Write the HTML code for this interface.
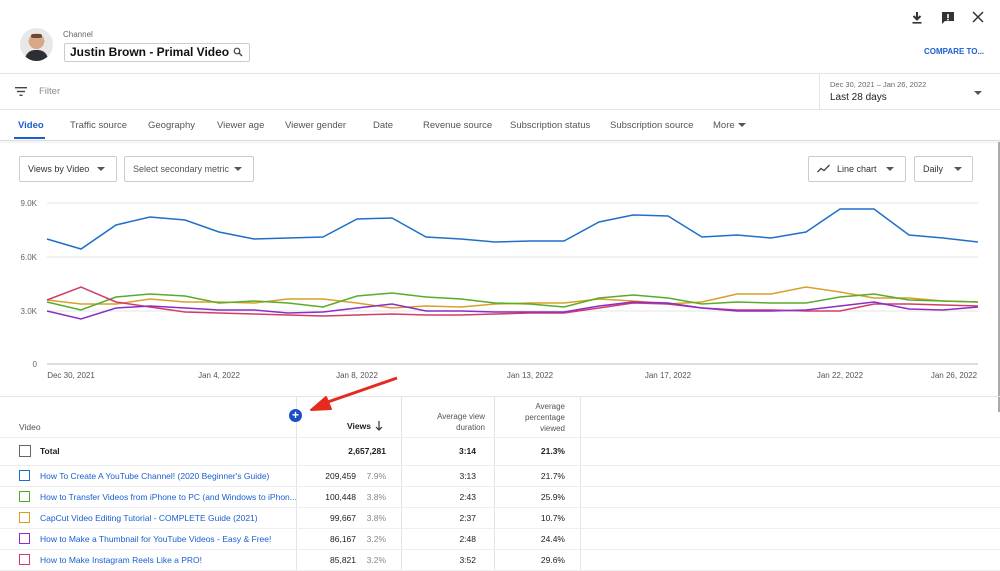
<!DOCTYPE html>
<html><head><meta charset="utf-8"><style>
*{margin:0;padding:0;box-sizing:border-box}
body{width:1000px;height:571px;overflow:hidden;background:#fff;font-family:"Liberation Sans",Arial,sans-serif;color:#202020;position:relative}
.a{position:absolute;white-space:nowrap}
.hl{position:absolute;left:0;width:1000px;height:1px;background:#e4e4e4}
.vl{position:absolute;width:1px;background:#e4e4e4}
.btn{position:absolute;border:1px solid #ccc;border-radius:2px;height:26px;font-size:9px;line-height:24px;padding-left:8px;color:#333}
.caret{position:absolute;width:0;height:0;border-left:4px solid transparent;border-right:4px solid transparent;border-top:4px solid #555}
.tab{position:absolute;top:120px;font-size:9.5px;color:#555}
.cb{position:absolute;left:19px;width:11px;height:11px}
.t{position:absolute;left:40px;font-size:8.5px;color:#1a5fd0}
.n{position:absolute;font-size:8.5px;text-align:right}
.g{color:#888}
</style></head><body>
<div class="a" style="left:20px;top:28px;width:33px;height:33px;border-radius:50%;background:radial-gradient(circle at 50% 40%,#d9a88a 0 30%,#e8e8e8 31%);overflow:hidden"><div style="position:absolute;left:5px;top:22px;width:23px;height:14px;background:#2b2f33;border-radius:10px 10px 0 0"></div><div style="position:absolute;left:11px;top:6px;width:11px;height:4px;background:#6b4a35;border-radius:4px"></div></div>
<div class="a" style="left:63px;top:30px;font-size:8px;color:#666">Channel</div>
<div class="a" style="left:64px;top:43px;width:186px;height:19px;border:1px solid #ccc;border-radius:2px;font-size:12px;font-weight:bold;line-height:17px;padding-left:5px;color:#111">Justin Brown - Primal Video</div>
<svg class="a" style="left:233px;top:47px" width="10" height="10" viewBox="0 0 10 10"><circle cx="4" cy="4" r="2.8" fill="none" stroke="#444" stroke-width="1.2"/><path d="M6 6L9 9" stroke="#444" stroke-width="1.4"/></svg>
<svg class="a" style="left:910px;top:11px" width="14" height="14" viewBox="0 0 14 14"><path d="M7 1V8M3.5 5L7 8.5 10.5 5" fill="none" stroke="#333" stroke-width="2"/><rect x="2.5" y="11" width="9" height="1.6" fill="#333"/></svg>
<svg class="a" style="left:941px;top:11px" width="14" height="14" viewBox="0 0 14 14"><path d="M1 1H13V10H4L1 13Z" fill="#333"/><rect x="6.2" y="3" width="1.6" height="4" fill="#fff"/><rect x="6.2" y="7.8" width="1.6" height="1.5" fill="#fff"/></svg>
<svg class="a" style="left:972px;top:11px" width="12" height="12" viewBox="0 0 12 12"><path d="M1 1L11 11M11 1L1 11" stroke="#333" stroke-width="1.5"/></svg>
<div class="a" style="left:924px;top:47px;font-size:8px;font-weight:bold;color:#1a5fd0">COMPARE TO...</div>
<div class="hl" style="top:73px"></div>
<svg class="a" style="left:15px;top:87px" width="12" height="9" viewBox="0 0 12 9"><rect x="0" y="0" width="12" height="1.4" fill="#444"/><rect x="2" y="3.8" width="8" height="1.4" fill="#444"/><rect x="4.5" y="7.6" width="3" height="1.4" fill="#444"/></svg>
<div class="a" style="left:39px;top:86px;font-size:9.5px;color:#888">Filter</div>
<div class="vl" style="left:819px;top:73px;height:36px"></div>
<div class="a" style="left:830px;top:80px;font-size:7.5px;color:#666">Dec 30, 2021 – Jan 26, 2022</div>
<div class="a" style="left:830px;top:92px;font-size:10px;color:#222">Last 28 days</div>
<div class="caret" style="left:974px;top:91px"></div>
<div class="hl" style="top:109px"></div>
<div class="tab" style="left:18px;color:#1a5fd0;font-weight:bold">Video</div>
<div class="a" style="left:14px;top:137px;width:31px;height:2px;background:#1a5fd0"></div>
<div class="tab" style="left:70px">Traffic source</div>
<div class="tab" style="left:148px">Geography</div>
<div class="tab" style="left:217px">Viewer age</div>
<div class="tab" style="left:285px">Viewer gender</div>
<div class="tab" style="left:373px">Date</div>
<div class="tab" style="left:423px">Revenue source</div>
<div class="tab" style="left:510px">Subscription status</div>
<div class="tab" style="left:610px">Subscription source</div>
<div class="tab" style="left:713px">More</div>
<div class="caret" style="left:738px;top:123px"></div>
<div class="hl" style="top:140px;background:#ddd;box-shadow:0 1px 2px #ddd"></div>
<div class="vl" style="left:998px;top:142px;height:270px;background:#aaa;width:2px"></div>
<div class="btn" style="left:19px;top:156px;width:98px">Views by Video</div><div class="caret" style="left:97px;top:167px"></div>
<div class="btn" style="left:124px;top:156px;width:130px;color:#555">Select secondary metric</div><div class="caret" style="left:234px;top:167px"></div>
<div class="btn" style="left:808px;top:156px;width:98px;padding-left:28px">Line chart</div><div class="caret" style="left:886px;top:167px"></div>
<svg class="a" style="left:817px;top:164px" width="13" height="9" viewBox="0 0 13 9"><path d="M0.5 8L4 4.5 7 6.5 12.5 1" fill="none" stroke="#444" stroke-width="1.3"/></svg>
<div class="btn" style="left:914px;top:156px;width:59px">Daily</div><div class="caret" style="left:954px;top:167px"></div>
<svg class="a" style="left:0;top:0;z-index:2" width="1000" height="430">
<g stroke="#e6e6e6" stroke-width="1"><line x1="47" y1="203" x2="978" y2="203"/><line x1="47" y1="257" x2="978" y2="257"/><line x1="47" y1="311" x2="978" y2="311"/><line x1="47" y1="364" x2="978" y2="364" stroke="#bbb"/></g>
<g font-size="8" fill="#666" font-family="Liberation Sans,sans-serif" text-anchor="end"><text x="37" y="206">9.0K</text><text x="37" y="260">6.0K</text><text x="37" y="314">3.0K</text><text x="37" y="367">0</text></g>
<g font-size="8" fill="#555" font-family="Liberation Sans,sans-serif" text-anchor="middle"><text x="71" y="378">Dec 30, 2021</text><text x="219" y="378">Jan 4, 2022</text><text x="357" y="378">Jan 8, 2022</text><text x="530" y="378">Jan 13, 2022</text><text x="668" y="378">Jan 17, 2022</text><text x="840" y="378">Jan 22, 2022</text><text x="954" y="378">Jan 26, 2022</text></g>
<g fill="none" stroke-width="1.5">
<polyline stroke="#d8a02a" points="47,300 81,304 116,304 150,299 185,302 219,302 254,303 288,299 323,299 357,303 392,308 426,306 461,307 495,304 530,303 564,303 599,299 633,301 668,304 702,302 737,294 771,294 806,287 840,292 874,298 909,298 943,301 978,302"/>
<polyline stroke="#5aab2a" points="47,302 81,310 116,297 150,294 185,296 219,303 254,301 288,303 323,307 357,296 392,293 426,297 461,299 495,303 530,304 564,307 599,298 633,295 668,298 702,304 737,302 771,303 806,303 840,297 874,294 909,300 943,301 978,302"/>
<polyline stroke="#d13d6a" points="47,300 81,287 116,302 150,307 185,312 219,313 254,314 288,315 323,316 357,315 392,314 426,315 461,315 495,314 530,313 564,313 599,308 633,303 668,304 702,308 737,310 771,310 806,311 840,311 874,304 909,304 943,305 978,306"/>
<polyline stroke="#8a2ec4" points="47,311 81,319 116,308 150,306 185,308 219,310 254,310 288,313 323,312 357,308 392,304 426,311 461,311 495,312 530,312 564,312 599,306 633,302 668,303 702,308 737,311 771,311 806,310 840,306 874,302 909,309 943,310 978,307"/>
<polyline stroke="#1f6fc9" points="47,239 81,249 116,225 150,217 185,220 219,232 254,239 288,238 323,237 357,219 392,218 426,237 461,239 495,242 530,241 564,241 599,222 633,215 668,216 702,237 737,235 771,238 806,232 840,209 874,209 909,235 943,238 978,242"/>
</g>
<path d="M397 378L322 404" stroke="#e52a1e" stroke-width="3"/><path d="M311 410L326 397 331 409Z" fill="#e52a1e" stroke="#e52a1e" stroke-width="2" stroke-linejoin="round"/>
</svg>
<div class="hl" style="top:396px"></div>
<div class="vl" style="left:296px;top:396px;height:175px"></div>
<div class="vl" style="left:401px;top:396px;height:175px"></div>
<div class="vl" style="left:494px;top:396px;height:175px"></div>
<div class="vl" style="left:580px;top:396px;height:175px"></div>
<div class="a" style="left:19px;top:422px;font-size:8.5px;color:#555">Video</div>
<div class="a" style="left:289px;top:409px;width:13px;height:13px;border-radius:50%;background:#1a4fc4;color:#fff;font-size:12px;line-height:12px;text-align:center;font-weight:bold;z-index:3">+</div>
<div class="a" style="left:347px;top:421px;font-size:8.5px;font-weight:bold">Views</div>
<svg class="a" style="left:375px;top:421px" width="8" height="10" viewBox="0 0 8 10"><path d="M4 0V9M1 6L4 9 7 6" fill="none" stroke="#333" stroke-width="1.2"/></svg>
<div class="a" style="left:405px;top:411px;width:80px;text-align:right;font-size:8px;color:#555;line-height:11px;white-space:normal">Average view<br>duration</div>
<div class="a" style="left:495px;top:401px;width:70px;text-align:right;font-size:8px;color:#555;line-height:11px;white-space:normal">Average<br>percentage<br>viewed</div>
<div class="hl" style="top:437px;background:#eee"></div>
<div class="cb" style="top:445px;border:1.5px solid #666;width:12px;height:12px"></div>
<div class="a" style="left:40px;top:446px;font-size:8.5px;font-weight:bold">Total</div>
<div class="n" style="left:300px;top:446px;width:86px;font-weight:bold">2,657,281</div>
<div class="n" style="left:400px;top:446px;width:76px;font-weight:bold">3:14</div>
<div class="n" style="left:490px;top:446px;width:75px;font-weight:bold">21.3%</div>
<div class="hl" style="top:465px;background:#eee"></div>
<div class="hl" style="top:486px;background:#eee"></div>
<div class="hl" style="top:507px;background:#eee"></div>
<div class="hl" style="top:528px;background:#eee"></div>
<div class="hl" style="top:549px;background:#eee"></div>
<div class="hl" style="top:570px;background:#eee"></div>

<div class="cb" style="top:470px;border:1.6px solid #1f6fc9"></div><div class="t" style="top:471px">How To Create A YouTube Channel! (2020 Beginner's Guide)</div>
<div class="n" style="left:300px;top:471px;width:56px">209,459</div><div class="n g" style="left:360px;top:471px;width:26px">7.9%</div><div class="n" style="left:400px;top:471px;width:76px">3:13</div><div class="n" style="left:490px;top:471px;width:75px">21.7%</div>

<div class="cb" style="top:491px;border:1.6px solid #4fa82a"></div><div class="t" style="top:492px">How to Transfer Videos from iPhone to PC (and Windows to iPhon...</div>
<div class="n" style="left:300px;top:492px;width:56px">100,448</div><div class="n g" style="left:360px;top:492px;width:26px">3.8%</div><div class="n" style="left:400px;top:492px;width:76px">2:43</div><div class="n" style="left:490px;top:492px;width:75px">25.9%</div>

<div class="cb" style="top:512px;border:1.6px solid #e09a20"></div><div class="t" style="top:513px">CapCut Video Editing Tutorial - COMPLETE Guide (2021)</div>
<div class="n" style="left:300px;top:513px;width:56px">99,667</div><div class="n g" style="left:360px;top:513px;width:26px">3.8%</div><div class="n" style="left:400px;top:513px;width:76px">2:37</div><div class="n" style="left:490px;top:513px;width:75px">10.7%</div>

<div class="cb" style="top:533px;border:1.6px solid #8a2ec4"></div><div class="t" style="top:534px">How to Make a Thumbnail for YouTube Videos - Easy &amp; Free!</div>
<div class="n" style="left:300px;top:534px;width:56px">86,167</div><div class="n g" style="left:360px;top:534px;width:26px">3.2%</div><div class="n" style="left:400px;top:534px;width:76px">2:48</div><div class="n" style="left:490px;top:534px;width:75px">24.4%</div>

<div class="cb" style="top:554px;border:1.6px solid #d13d6a"></div><div class="t" style="top:555px">How to Make Instagram Reels Like a PRO!</div>
<div class="n" style="left:300px;top:555px;width:56px">85,821</div><div class="n g" style="left:360px;top:555px;width:26px">3.2%</div><div class="n" style="left:400px;top:555px;width:76px">3:52</div><div class="n" style="left:490px;top:555px;width:75px">29.6%</div>
</body></html>
